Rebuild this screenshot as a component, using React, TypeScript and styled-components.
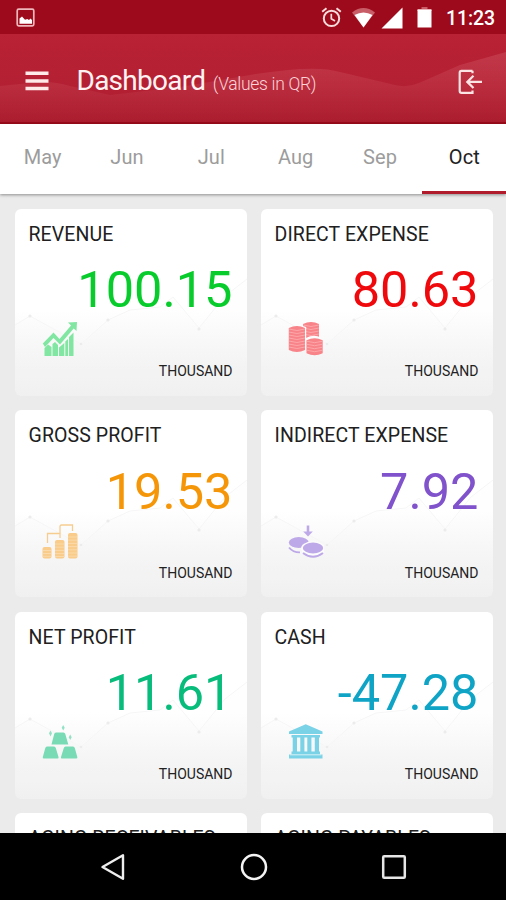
import React from 'react';
import styled, { createGlobalStyle } from 'styled-components';

const GlobalStyle = createGlobalStyle`
  html, body { margin: 0; padding: 0; }
  body { font-family: Roboto, "Liberation Sans", sans-serif; background: #ebebeb; }
  * { box-sizing: border-box; }
`;

const Screen = styled.div`
  width: 506px;
  height: 900px;
  overflow: hidden;
  display: flex;
  flex-direction: column;
  background: #ebebeb;
`;

const StatusBar = styled.div`
  flex: none;
  height: 34px;
  background: #9d0a1b;
  display: flex;
  align-items: center;
  justify-content: space-between;
  padding: 1px 10px 0 16px;
  color: #fff;
`;

const StatusIcons = styled.div`
  display: flex;
  align-items: center;
`;

const Clock = styled.span`
  width: 50px;
  margin-left: 14px;
  padding-top: 2px;
  font-size: 19.5px;
  font-weight: 500;
  line-height: 34px;
  letter-spacing: -0.1px;
  white-space: nowrap;
`;

const Header = styled.header`
  flex: none;
  height: 90px;
  display: grid;
  background: linear-gradient(#b92134, #b42033 60%, #ab1d2e);
  border-bottom: 2px solid #9b0b1a;
  > * { grid-area: 1 / 1; }
`;

const HeaderContent = styled.div`
  display: flex;
  align-items: center;
  padding: 6px 23px 0 25px;
  z-index: 1;
`;

const Title = styled.h1`
  display: flex;
  align-items: baseline;
  margin: 3px 0 0 27.5px;
  flex: 1;
  font-size: 28px;
  font-weight: 400;
  line-height: 40px;
  letter-spacing: -0.75px;
  color: #fff2f2;
  white-space: nowrap;
`;

const Unit = styled.span`
  margin-left: 7.5px;
  font-size: 17.5px;
  font-weight: 300;
  letter-spacing: -0.3px;
  color: #f9d3d7;
`;

const Tabs = styled.nav`
  flex: none;
  height: 70px;
  display: grid;
  grid-template-columns: repeat(6, 1fr);
  background: #fff;
  box-shadow: 0 1px 3px rgba(0, 0, 0, 0.4);
  z-index: 1;
`;

const Tab = styled.div<{ $active?: boolean }>`
  display: flex;
  justify-content: center;
  padding: 20px 0 0 1px;
  border-bottom: 3px solid ${(p) => (p.$active ? '#b01c2c' : 'transparent')};
  color: ${(p) => (p.$active ? '#222' : '#9c9c9c')};
  font-size: 20px;
  line-height: 26px;
  letter-spacing: 0.1px;
`;

const Cards = styled.main`
  flex: 1;
  min-height: 0;
  overflow: hidden;
  display: grid;
  grid-template-columns: 232px 232px;
  grid-auto-rows: 187px;
  gap: 14.5px 14px;
  padding: 14.7px 13px 0 14.5px;
`;

const CardBox = styled.section`
  display: grid;
  border-radius: 6px;
  overflow: hidden;
  background: linear-gradient(#fff 0%, #fff 54%, #f7f7f7 76%, #f0f0f0 100%);
  > * { grid-area: 1 / 1; }
`;

const CardContent = styled.div`
  display: flex;
  flex-direction: column;
  padding: 13px 14px 0 14px;
  z-index: 1;
`;

const Label = styled.h2`
  margin: 0;
  font-size: 19.5px;
  font-weight: 400;
  line-height: 25px;
  letter-spacing: 0.1px;
  color: #202020;
  white-space: nowrap;
`;

const Amount = styled.div<{ $color: string }>`
  margin-top: 13.5px;
  text-align: right;
  font-size: 50.5px;
  line-height: 60px;
  letter-spacing: 0;
  color: ${(p) => p.$color};
`;

const CardFoot = styled.div`
  display: flex;
  justify-content: space-between;
  padding-left: 13.5px;
  margin-top: 1px;
`;

const Scale = styled.span`
  margin-top: 40px;
  font-size: 14px;
  line-height: 20px;
  letter-spacing: 0;
  color: #222;
`;

const NavBar = styled.footer`
  flex: none;
  height: 67px;
  background: #000;
  display: flex;
  align-items: center;
  justify-content: space-between;
  padding: 0 98px 0 99px;
`;

const Svg = styled.svg`
  display: block;
  flex: none;
`;

const PictureIcon = () => (
  <Svg width="19" height="19" viewBox="0 0 19 19">
    <rect x="1.2" y="1.2" width="16.6" height="16.6" rx="1.5" fill="none" stroke="#eeb7bb" strokeWidth="1.7" />
    <path d="M3.5 15.7V10.5L6 8.5L9 11.8L11.3 11L13 12L14.5 10.5L16 12V15.7Z" fill="#fff" />
  </Svg>
);

const AlarmIcon = () => (
  <Svg width="21" height="21" viewBox="0 0 21 21" fill="none" stroke="#f8dcdc" strokeWidth="2">
    <circle cx="10.5" cy="11.4" r="7.7" />
    <path d="M1.2 4.8L5.5 1.3M15.5 1.3L19.8 4.8" />
    <path d="M10.3 6.8V11.8L14 14" strokeWidth="1.7" />
  </Svg>
);

const WifiIcon = () => (
  <Svg width="23" height="20" viewBox="0 0 23 20">
    <path d="M0 4.4Q11.5 -4.4 23 4.4L11.5 19.5Z" fill="#c85d68" />
    <path d="M2.5 7Q11.5 2 20.5 7L11.5 19.5Z" fill="#fff" />
  </Svg>
);

const SignalIcon = () => (
  <Svg width="22" height="22" viewBox="0 0 22 22">
    <path d="M0.5 21.5L21.5 0.5V21.5Z" fill="#fff" />
  </Svg>
);

const BatteryIcon = () => (
  <Svg width="15" height="21" viewBox="0 0 15 21">
    <path d="M4.5 0H10.5V2H4.5Z" fill="#c85d68" />
    <path d="M0.5 2H14.5V4H0.5Z" fill="#e9b3b7" />
    <path d="M0.5 3H14.5V20.5H0.5Z" fill="#fff" />
  </Svg>
);

const StatusSpacer = styled.span<{ $w: number }>`
  width: ${(p) => p.$w}px;
`;

const HeaderWaves = () => (
  <Svg width="506" height="88" viewBox="0 0 506 88">
    <defs>
      <linearGradient id="wave" x1="0" y1="0" x2="0" y2="1">
        <stop offset="0" stopColor="#ffc0c8" stopOpacity="0.15" />
        <stop offset="1" stopColor="#ffc0c8" stopOpacity="0" />
      </linearGradient>
    </defs>
    <path d="M0 52L30 49Q50 46 70 52L110 61L180 53L250 41Q315 30 340 38L395 51Q407 54 419 49L460 31L506 18V88H0Z" fill="url(#wave)" />
  </Svg>
);

const MenuIcon = () => (
  <Svg width="24" height="20" viewBox="0 0 24 20">
    <path d="M0.5 2.3H23.5M0.5 9.9H23.5M0.5 17.5H23.5" stroke="#ffe9e9" strokeWidth="3.5" />
  </Svg>
);

const LogoutIcon = () => (
  <Svg width="25" height="25" viewBox="0 0 25 25" fill="none" stroke="#fce3e4" strokeWidth="2.2">
    <path d="M14.5 1.8H3.5Q1.7 1.8 1.7 3.8V22Q1.7 23.9 3.5 23.9H14.5V21.5M14.5 1.8V4.2" />
    <path d="M24 12.9H9.5M15.5 6.8L9.3 12.9L15.5 19" />
  </Svg>
);

const CardTrend = () => (
  <Svg width="232" height="187" viewBox="0 0 232 187">
    <path d="M0 116L15 107L66 135L93 111L115 101L145 98L158 88L184 119L210 87L232 70V187H0Z" fill="#ededed" opacity="0.08" />
    <path d="M0 116L15 107L66 135L93 111L115 101L145 98L158 88L184 119L210 87L232 70" fill="none" stroke="#f6f6f6" strokeWidth="1" />
    <g fill="#ececec">
      <circle cx="15" cy="107" r="1.6" />
      <circle cx="66" cy="135" r="1.3" />
      <circle cx="93" cy="111" r="1.6" />
      <circle cx="184" cy="120" r="1.6" />
    </g>
  </Svg>
);

const iconProps = { width: 36, height: 36, viewBox: '0 0 36 36' };

const GrowthIcon = () => (
  <Svg {...iconProps}>
    <g fill="#82e6a3">
      <path d="M2.5 27L6 23.5L9.5 26V35H2.5ZM10.5 23L13 21L16 24V35H10.5ZM17 26.5L22.3 22V35H17ZM23.3 20.5L26 18V35H23.3ZM27 16L31.5 11.5V35H27Z" />
      <path d="M26 1.5L35 1L34.5 10L31.7 7.4L18 23.5L11.5 17L3 26L0.8 22.5L11.5 11.5L17.5 18L29 4.5Z" />
    </g>
  </Svg>
);

type StackProps = { x: number; y: number; w: number; rows: number };
const CoinStack = ({ x, y, w, rows }: StackProps) => {
  const step = 3;
  const bottom = y + rows * step;
  return (
    <g>
      <path d={`M${x} ${y + 2}Q${x + w / 2} ${y - 2} ${x + w} ${y + 2}V${bottom}Q${x + w / 2} ${bottom + 4} ${x} ${bottom}Z`} fill="#f88388" />
      {Array.from({ length: rows - 1 }, (_, i) => (
        <path key={i} d={`M${x} ${y + 3 + i * step}q${w / 2} 3 ${w} 0`} fill="none" stroke="#fdb0b3" strokeWidth="0.8" />
      ))}
    </g>
  );
};

const ExpenseIcon = () => (
  <Svg {...iconProps}>
    <CoinStack x={15} y={1} w={16} rows={5} />
    <path d="M13 4.5L18.2 6V20H13Z" fill="#fdfdfd" />
    <CoinStack x={0.8} y={5} w={16.2} rows={8} />
    <path d="M17.8 17Q26 13 33 16.5V20H17.8Z" fill="#fbfbfb" />
    <CoinStack x={18.5} y={17.2} w={16.2} rows={5} />
  </Svg>
);

const BarsIcon = () => (
  <Svg {...iconProps}>
    <g fill="none" stroke="#f6cd91" strokeWidth="1.3">
      <path d="M5.5 20V10.5H18V15M18 12V3.5Q18 2 19.5 2H30.5V8" />
    </g>
    <g fill="#f9cc8b">
      <rect x="0.5" y="24" width="9" height="11.5" rx="2" />
      <rect x="13" y="17" width="9.5" height="18.5" rx="2" />
      <rect x="26" y="10" width="9.5" height="25.5" rx="2" />
    </g>
    <path d="M1 27.5H9M1 30.5H9M1 33.3H9M13 21H22M13 24.2H22M13 27.4H22M13 30.6H22M13 33.5H22M26 14H35M26 17.2H35M26 20.4H35M26 23.6H35M26 26.8H35M26 30H35M26 33.2H35" stroke="#fcdfb6" strokeWidth="0.7" />
  </Svg>
);

const CoinsIcon = () => (
  <Svg {...iconProps}>
    <g fill="#bea9e8">
      <path d="M18.7 2.5H21.3V8.5H24.8L20 13.5L15.2 8.5H18.7Z" />
      <ellipse cx="10.8" cy="19.5" rx="10" ry="5.4" />
    </g>
    <path d="M1 24.5Q5 29.5 12 29.4" fill="none" stroke="#bea9e8" strokeWidth="1.9" />
    <ellipse cx="25" cy="25.5" rx="12" ry="7.2" fill="#fcfcfc" />
    <ellipse cx="25" cy="25" rx="10.2" ry="5.4" fill="#bea9e8" />
    <path d="M15 30Q25 37.5 35 30" fill="none" stroke="#bea9e8" strokeWidth="1.9" />
  </Svg>
);

const GoldIcon = () => (
  <Svg {...iconProps}>
    <g fill="#78dbb6">
      <path d="M14 8.5H21.5Q22.8 8.5 23.3 10L26.3 20.5H9.5L12.2 10Q12.6 8.5 14 8.5Z" />
      <path d="M5 22.5H12Q13.3 22.5 13.8 24L16.5 33Q17 34.5 15.5 34.5H2Q0.3 34.5 0.8 33L3.3 24Q3.7 22.5 5 22.5Z" />
      <path d="M23.5 22.5H31Q32.3 22.5 32.8 24L35.3 33Q35.8 34.5 34 34.5H20Q18.5 34.5 19 33L21.8 24Q22.2 22.5 23.5 22.5Z" />
      <path d="M21.2 1L22.7 3.8L21.2 6.6L19.7 3.8ZM8.5 6.5L10 9.3L8.5 12.5L7 9.3ZM28.2 10.5L29.7 13.2L28.2 16L26.7 13.2Z" opacity="0.8" />
    </g>
  </Svg>
);

const BankIcon = () => (
  <Svg {...iconProps}>
    <g fill="#79d2e6">
      <path d="M17.7 0.2L34.5 7.5V10H1V7.5Z" />
      <path d="M3.5 11H32V13.5H3.5Z" />
      <path d="M4.7 13H9V29H4.7ZM12.3 13H16.4V29H12.3ZM19.3 13H23.4V29H19.3ZM26.8 13H31V29H26.8Z" />
      <path d="M3.5 27.5H32V30.5H34.5V34.5H1V30.5H3.5Z" />
    </g>
    <path d="M2 30.8H33.5" stroke="#d5f1f7" strokeWidth="1" />
  </Svg>
);

const NavBack = () => (
  <Svg width="28" height="28" viewBox="0 0 28 28">
    <path d="M3.5 14L24 2.3V25.7Z" fill="none" stroke="#eee" strokeWidth="2.4" strokeLinejoin="round" />
  </Svg>
);
const NavHome = () => (
  <Svg width="28" height="28" viewBox="0 0 28 28">
    <circle cx="14" cy="14" r="12" fill="none" stroke="#f4f4f4" strokeWidth="2.5" />
  </Svg>
);
const NavRecent = () => (
  <Svg width="28" height="28" viewBox="0 0 28 28">
    <rect x="3.2" y="3.2" width="21.6" height="21.6" rx="1" fill="none" stroke="#e6e6e6" strokeWidth="2.5" />
  </Svg>
);

const months = ['May', 'Jun', 'Jul', 'Aug', 'Sep', 'Oct'];

type CardData = { label: string; amount?: string; color?: string; icon?: React.ReactNode };
const cards: CardData[] = [
  { label: 'REVENUE', amount: '100.15', color: '#08cb2c', icon: <GrowthIcon /> },
  { label: 'DIRECT EXPENSE', amount: '80.63', color: '#ef080c', icon: <ExpenseIcon /> },
  { label: 'GROSS PROFIT', amount: '19.53', color: '#f59608', icon: <BarsIcon /> },
  { label: 'INDIRECT EXPENSE', amount: '7.92', color: '#8052cb', icon: <CoinsIcon /> },
  { label: 'NET PROFIT', amount: '11.61', color: '#08bc7c', icon: <GoldIcon /> },
  { label: 'CASH', amount: '-47.28', color: '#0fa4c6', icon: <BankIcon /> },
  { label: 'AGING RECEIVABLES' },
  { label: 'AGING PAYABLES' },
];

const Card = ({ label, amount, color, icon }: CardData) => (
  <CardBox>
    <CardTrend />
    <CardContent>
      <Label>{label}</Label>
      {amount && (
        <>
          <Amount $color={color || '#222'}>{amount}</Amount>
          <CardFoot>
            {icon}
            <Scale>THOUSAND</Scale>
          </CardFoot>
        </>
      )}
    </CardContent>
  </CardBox>
);

export default function App() {
  return (
    <>
      <GlobalStyle />
      <Screen>
        <StatusBar>
          <PictureIcon />
          <StatusIcons>
            <AlarmIcon />
            <StatusSpacer $w={10} />
            <WifiIcon />
            <StatusSpacer $w={6} />
            <SignalIcon />
            <StatusSpacer $w={14} />
            <BatteryIcon />
            <Clock>11:23</Clock>
          </StatusIcons>
        </StatusBar>
        <Header>
          <HeaderWaves />
          <HeaderContent>
            <MenuIcon />
            <Title>
              Dashboard<Unit>(Values in QR)</Unit>
            </Title>
            <LogoutIcon />
          </HeaderContent>
        </Header>
        <Tabs>
          {months.map((m) => (
            <Tab key={m} $active={m === 'Oct'}>
              {m}
            </Tab>
          ))}
        </Tabs>
        <Cards>
          {cards.map((c) => (
            <Card key={c.label} {...c} />
          ))}
        </Cards>
        <NavBar>
          <NavBack />
          <NavHome />
          <NavRecent />
        </NavBar>
      </Screen>
    </>
  );
}
